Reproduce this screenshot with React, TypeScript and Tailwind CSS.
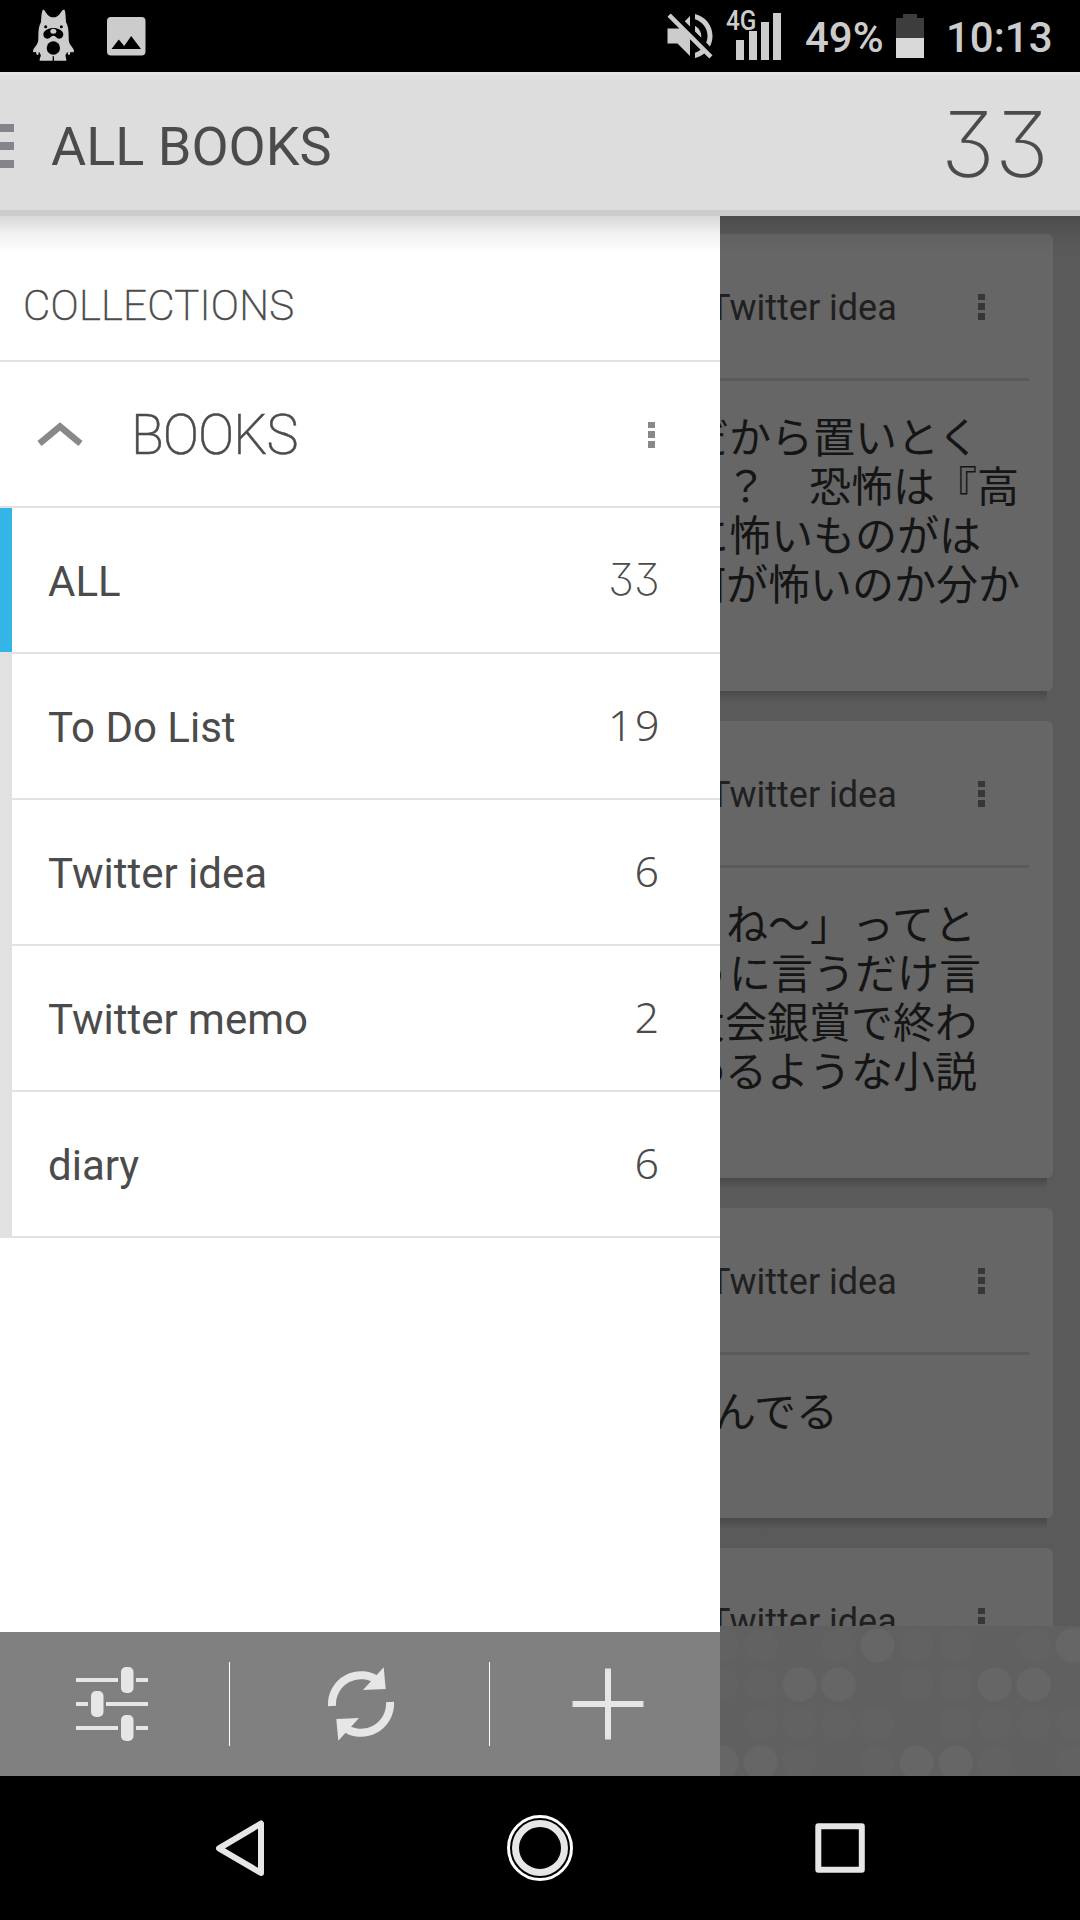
import clsx from 'clsx'

interface Book {
  name: string
  count: string
  active?: boolean
  countClass: string
}

interface Line {
  text: string
  className: string
}

const books: Book[] = [
  { name: 'ALL', count: '33', active: true, countClass: 'font-["Inter",sans-serif] font-[220] mr-[60px] tracking-[0.3px] [font-feature-settings:"cv09"]' },
  { name: 'To Do List', count: '19', countClass: 'font-["Noto_Sans",sans-serif] font-[270] tracking-[2.5px] mr-[58px]' },
  { name: 'Twitter idea', count: '6', countClass: 'font-["Noto_Sans",sans-serif] font-[270] tracking-[2px] mr-[59px]' },
  { name: 'Twitter memo', count: '2', countClass: 'font-["Noto_Sans",sans-serif] font-[270] tracking-[2px] mr-[59px]' },
  { name: 'diary', count: '6', countClass: 'font-["Noto_Sans",sans-serif] font-[270] tracking-[2px] mr-[59px]' },
]

const notes: { height: string; lines: Line[] }[] = [
  {
    height: 'h-[457px]',
    lines: [
      { text: 'だから置いとく', className: '-ml-[33px]' },
      { text: '？　恐怖は『高', className: 'ml-[5px]' },
      { text: 'に怖いものがは', className: '-ml-[33px]' },
      { text: '何が怖いのか分か', className: '-ml-[36px]' },
    ],
  },
  {
    height: 'h-[457px]',
    lines: [
      { text: 'ね〜」ってと', className: 'ml-[6px]' },
      { text: 'うに言うだけ言', className: '-ml-[33px]' },
      { text: '大会銀賞で終わ', className: '-ml-[37px]' },
      { text: 'わるような小説', className: '-ml-[37px]' },
    ],
  },
  {
    height: 'h-[310px]',
    lines: [{ text: 'んでる', className: '-ml-[6px]' }],
  },
  { height: 'h-[310px]', lines: [] },
]

// 0 = empty, 1 = faint, 2 = bright; repeats every five columns
const dotRows = [
  [1, 1, 0, 1, 2],
  [1, 1, 2, 2, 0],
  [0, 1, 1, 1, 1],
  [2, 2, 1, 0, 1],
]

function Kebab({ className }: { className?: string }) {
  return (
    <svg className={className} width="7" height="26" viewBox="0 0 7 26" fill="currentColor">
      <rect width="7" height="6" />
      <rect y="9" width="7" height="7" />
      <rect y="19" width="7" height="7" />
    </svg>
  )
}

function StatusBar() {
  return (
    <div className="flex h-[72px] bg-black text-[#cccccc]">
      <svg className="ml-8 mt-[9px]" width="44" height="52" viewBox="96 27 132 156">
        <path
          fill="#cccccc"
          d="M128 30c-4 10-4 22-5 36c-7 12-8 28-8 45c0 9 0 14-4 22c-3 6-12 13-12 20c0 6 7 3 9 2c0 5 2 10 5 10c3 0 3-5 3-9c3 0 4 6 6 8c2 6-3 6-3 18h80c0-12-4-12-2-18c2-2 4-8 6-8c0 5 1 9 4 9c3 0 4-5 4-10c4 2 11 3 11-2c0-7-9-14-12-20c-4-8-4-13-4-22c0-17-1-33-8-45c-1-14-1-26-4-36c-3-1-6-1-8 2c-7 11-14 20-26 20c-12 0-19-9-26-20c-1-2-4-3-6-2z"
        />
        <circle cx="137" cy="80" r="4.5" />
        <circle cx="184" cy="80" r="4.5" />
        <path d="M160 84c14 0 30 8 30 19c0 8-5 13-12 13c-9 0-10-9-18-9c-8 0-9 9-18 9c-7 0-12-5-12-13c0-11 16-19 30-19z" />
        <ellipse cx="160" cy="94" rx="9" ry="7.500" fill="#cccccc" />
        <circle cx="160" cy="144" r="20" />
        <path d="M158 169h4v14h-4z" />
      </svg>
      <svg className="ml-[31px] mt-[17px]" width="39" height="39" viewBox="0 0 39 39">
        <rect width="38.500" height="38.500" rx="4" fill="#cccccc" />
        <path d="M4.500 32l7.300-9.500 5.400 6.500 7-10 9.800 13z" />
      </svg>
      <svg className="ml-auto mt-[6px]" width="60" height="60" viewBox="0 0 24 24" fill="currentColor">
        <path d="M16.500 12c0-1.770-1.020-3.290-2.500-4.030v2.210l2.450 2.450c.03-.2.05-.41.05-.63zm2.500 0c0 .94-.2 1.820-.54 2.640l1.510 1.510C20.630 14.910 21 13.500 21 12c0-4.280-2.990-7.860-7-8.770v2.060c2.890.86 5 3.540 5 6.710zM4.270 3L3 4.270 7.730 9H3v6h4l5 5v-6.730l4.250 4.250c-.67.52-1.420.93-2.250 1.180v2.060c1.380-.31 2.630-.95 3.690-1.810L19.730 21 21 19.730l-9-9L4.270 3zM12 4L9.910 6.090 12 8.180V4z" />
      </svg>
      <div className="relative ml-4 mt-[12px] h-[48px] w-[45px]">
        <svg width="45" height="48" viewBox="0 0 45 48" fill="currentColor">
          <rect y="28" width="8" height="20" />
          <rect x="13" y="19" width="8" height="29" />
          <rect x="25" y="10" width="8" height="38" />
          <rect x="37" y="1" width="8" height="47" />
        </svg>
        <span className="absolute -left-[10px] -top-[5px] origin-left scale-x-[.87] text-[28px] leading-[28px] font-medium">4G</span>
      </div>
      <span className="ml-[24px] mt-[13px] w-[78px] text-[42px] leading-[50px] font-medium">49%</span>
      <svg className="ml-[13px] mt-[14px]" width="28" height="44" viewBox="0 0 28 44">
        <path d="M0 4h7V0h14v4h7v20H0z" fill="#3d3d3d" />
        <path d="M0 24h28v20H0z" fill="#d9d9d9" />
      </svg>
      <span className="ml-[22px] mr-[28px] mt-[13px] w-[106px] text-[42px] leading-[50px] font-medium">10:13</span>
    </div>
  )
}

function Header() {
  return (
    <header className="flex h-[144px] items-center border-t-[3px] border-b-[6px] border-t-[#e4e4e4] border-b-[#cccccc] bg-[#dddddd] text-[#4b4b4b]">
      <svg className="mt-[7px]" width="14" height="44" viewBox="0 0 14 44" fill="#84858a">
        <rect width="14" height="8" />
        <rect y="18" width="14" height="8" />
        <rect y="36" width="14" height="8" />
      </svg>
      <h1 className="ml-[37px] mt-2 text-[54px] leading-none">ALL BOOKS</h1>
      <span className='ml-auto mr-[31px] mt-1 font-["Inter",sans-serif] text-[91px] leading-none font-[170] [font-feature-settings:"cv09"]'>
        33
      </span>
    </header>
  )
}

function BookRow({ book }: { book: Book }) {
  return (
    <li className="flex h-[146px] border-b-2 border-[#e2e2e2]">
      <span className={clsx('w-3', book.active ? 'bg-[#33b5e5]' : 'bg-[#e1e1e1]')} />
      <span className="ml-9 mt-[49px] text-[42px] leading-[50px]">{book.name}</span>
      <span className={clsx('ml-auto mt-[46px] text-[43px] leading-[50px]', book.countClass)}>{book.count}</span>
    </li>
  )
}

function Toolbar() {
  return (
    <div className="flex h-[144px] items-center bg-[#808080]">
      <svg width="229" height="144" viewBox="0 0 229 144" fill="#e6e6e6">
        <path d="M76 46h42v4H76zM136 46h12v4h-12zM76 70h12v4H76zM106 70h42v4h-42zM76 94h42v4H76zM136 94h12v4h-12z" />
        <rect x="121" y="35" width="12.500" height="26" rx="5" />
        <rect x="91" y="59" width="12.500" height="26" rx="5" />
        <rect x="121" y="83" width="12.500" height="26" rx="5" />
      </svg>
      <div className="h-[84px] w-px bg-white" />
      <svg width="259" height="144" viewBox="0 0 259 144">
        <g fill="none" stroke="#e6e6e6" strokeWidth="8">
          <path d="M102 74a29 29 0 0 1 47-24.500" />
          <path d="M160 70a29 29 0 0 1-47 24.500" />
        </g>
        <g fill="#e6e6e6">
          <path d="M153.700 35.300l2 21.700-22.700 1z" />
          <path d="M108.300 108.700l-2-21.700 22.700-1z" />
        </g>
      </svg>
      <div className="h-[84px] w-px bg-white" />
      <svg width="230" height="144" viewBox="0 0 230 144" fill="#e6e6e6">
        <path d="M82.500 69h71v6h-71z" />
        <path d="M115 36.500h6v71h-6z" />
      </svg>
    </div>
  )
}

function Drawer() {
  return (
    <aside className="flex w-[720px] flex-col bg-white text-[#4b4b4b]">
      <div className="flex h-[146px] items-end border-b-2 border-[#e2e2e2] pb-[29px] pl-[23px]">
        <h2 className="text-[42px] leading-[50px] font-extralight [-webkit-text-stroke:0.5px_#4b4b4b] tracking-[0.25px]">COLLECTIONS</h2>
      </div>
      <div className="flex h-[146px] border-b-2 border-[#e2e2e2]">
        <svg className="ml-9 mt-[56px]" width="48" height="32" viewBox="0 0 48 32" fill="none" stroke="#888888" strokeWidth="6.500">
          <path d="M3.500 25.500L24 8.500l20.500 17" />
        </svg>
        <h3 className="ml-[47px] mt-[41px] origin-left scale-x-[.965] text-[56px] leading-[64px] font-extralight [-webkit-text-stroke:0.5px_#4b4b4b] tracking-[-1px]">BOOKS</h3>
        <Kebab className="ml-auto mr-[65px] mt-[60px] text-[#888888]" />
      </div>
      <ul>
        {books.map((book) => (
          <BookRow key={book.name} book={book} />
        ))}
      </ul>
      <div className="mt-auto">
        <Toolbar />
      </div>
    </aside>
  )
}

function NoteCard({ height, lines }: { height: string; lines: Line[] }) {
  return (
    <div className={clsx('relative mr-[27px] mb-[30px] shrink-0', height)}>
      <div className="absolute top-full right-[6px] left-0 h-[11px] bg-gradient-to-b from-[#494949] to-[#5a5a5a]" />
      <div className="relative h-full rounded-r-[6px] bg-[#666666]">
        <div className="mr-6 flex h-[147px] border-b-[3px] border-[#5a5a5a]">
          <span className="-ml-[11px] mt-[53px] text-[36px] leading-[42px] text-[#202020]">Twitter idea</span>
          <Kebab className="ml-auto mr-[44px] mt-[60px] text-[#373737]" />
        </div>
        <div className='pt-[29px] font-["Noto_Sans_CJK_JP",sans-serif] text-[42px] leading-[49px] text-[#151515]'>
          {lines.map((line) => (
            <p key={line.text} className={clsx('whitespace-pre', line.className)}>
              {line.text}
            </p>
          ))}
        </div>
      </div>
    </div>
  )
}

function DotPattern() {
  return (
    <svg className="shrink-0 bg-[#606060]" width="360" height="150" viewBox="0 0 360 150">
      {dotRows.map((row, y) =>
        Array.from({ length: 10 }, (_, x) => {
          const level = row[x % 5]
          if (!level) return null
          return (
            <circle
              key={`${x}-${y}`}
              cx={1.7 + x * 39}
              cy={19.5 + y * 39}
              r="17"
              fill={level === 2 ? '#666666' : '#626262'}
            />
          )
        })
      )}
    </svg>
  )
}

function Notes() {
  return (
    <main className="flex w-[360px] flex-col overflow-hidden bg-[#5a5a5a]">
      <div className="flex h-[1410px] flex-col overflow-hidden pt-[18px]">
        {notes.map((note, i) => (
          <NoteCard key={i} {...note} />
        ))}
      </div>
      <DotPattern />
    </main>
  )
}

function NavBar() {
  return (
    <nav className="flex h-[144px] justify-center bg-black">
      <svg width="300" height="144" viewBox="0 0 300 144" fill="none" stroke="#e6e6e6" strokeWidth="6" strokeLinejoin="round">
        <path d="M129 72.300L171 47.500v49.500z" />
      </svg>
      <svg width="300" height="144" viewBox="0 0 300 144" fill="none">
        <circle cx="150" cy="72" r="31.500" stroke="#ffffff" strokeWidth="3" />
        <circle cx="150" cy="72" r="24.500" stroke="#e6e6e6" strokeWidth="7" />
      </svg>
      <svg width="300" height="144" viewBox="0 0 300 144" fill="none" stroke="#e6e6e6" strokeWidth="6" strokeLinejoin="round">
        <rect x="128.300" y="50.300" width="43.500" height="43.500" />
      </svg>
    </nav>
  )
}

export default function App() {
  return (
    <div className='h-[1920px] w-[1080px] overflow-hidden bg-black font-["Roboto",sans-serif]'>
      <StatusBar />
      <Header />
      <div className="relative flex h-[1560px]">
        <Drawer />
        <Notes />
        {/* Shadow that the header throws on the content */}
        <div className="pointer-events-none absolute inset-x-0 top-0 h-[38px] bg-gradient-to-b from-black/15 via-black/5 to-transparent" />
      </div>
      <NavBar />
    </div>
  )
}
